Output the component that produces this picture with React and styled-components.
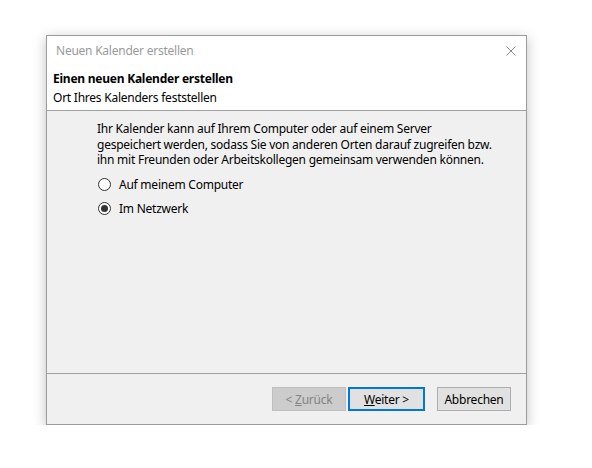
import React from "react"
import styled, { createGlobalStyle } from "styled-components"

const GlobalStyle = createGlobalStyle`
    html, body {
        margin: 0;
        padding: 0;
        background: #ffffff;
    }
    body {
        font-family: "Segoe UI", "Noto Sans", sans-serif;
        font-size: 12px;
        letter-spacing: -0.24px;
        color: #000;
    }
`

const Page = styled.div`
    padding: 35px 0 0 46px;
`

const Window = styled.div`
    width: 479px;
    height: 388px;
    display: flex;
    flex-direction: column;
    border: 1px solid #9c9c9c;
    background: #f0f0f0;
    box-shadow: 0 3px 12px rgba(0, 0, 0, 0.25);
`

const TitleBar = styled.div`
    height: 29px;
    display: flex;
    align-items: center;
    justify-content: space-between;
    padding: 0 10px 0 9px;
    background: #fff;
    color: #9a9a9a;
`

const CloseIcon = styled.svg`
    width: 10px;
    height: 10px;
`

const Header = styled.div`
    display: flex;
    flex-direction: column;
    gap: 3px;
    padding: 6px 6px 4px;
    background: #fff;
    border-bottom: 1px solid #a0a0a0;
    line-height: 16px;
`

const Heading = styled.div`
    font-weight: bold;
`

const Body = styled.div`
    flex: 1;
    padding: 10px 0 0 50px;
`

const Description = styled.p`
    margin: 0 0 5px;
    line-height: 15.5px;
`

const RadioRow = styled.label`
    height: 24px;
    display: flex;
    align-items: center;
    gap: 8px;
    padding-left: 1px;
`

const RadioCircle = styled.span`
    box-sizing: border-box;
    width: 13px;
    height: 13px;
    border: 1px solid #333;
    border-radius: 50%;
    background: #fff;
    display: flex;
    align-items: center;
    justify-content: center;

    &::after {
        content: "";
        width: 7px;
        height: 7px;
        border-radius: 50%;
        background: ${p => (p.$checked ? "#333" : "transparent")};
    }
`

const Footer = styled.div`
    display: flex;
    justify-content: flex-end;
    align-items: center;
    padding: 13px 15px 13px 0;
    border-top: 1px solid #a0a0a0;
`

const ButtonGroup = styled.div`
    display: flex;
    gap: 2px;
    margin-right: 12px;
`

const Button = styled.button`
    box-sizing: border-box;
    width: ${p => p.$width || 75}px;
    height: 24px;
    padding: 0;
    font: inherit;
    letter-spacing: inherit;
    background: ${p => (p.disabled ? "#cccccc" : "#e1e1e1")};
    color: ${p => (p.disabled ? "#838383" : "#000")};
    border: ${p => (p.$default ? "2px solid #0078d7" : p.disabled ? "1px solid #bfbfbf" : "1px solid #adadad")};
`

function Radio({ checked, children }) {
    return (
        <RadioRow>
            <RadioCircle $checked={checked} />
            {children}
        </RadioRow>
    )
}

export default function App() {
    return (
        <>
            <GlobalStyle />
            <Page>
                <Window>
                    <TitleBar>
                        <span>Neuen Kalender erstellen</span>
                        <CloseIcon viewBox="0 0 10 10">
                            <path d="M0.5 0.5 L9.5 9.5 M9.5 0.5 L0.5 9.5" stroke="#8a8a8a" strokeWidth="1" fill="none" />
                        </CloseIcon>
                    </TitleBar>
                    <Header>
                        <Heading>Einen neuen Kalender erstellen</Heading>
                        <div>Ort Ihres Kalenders feststellen</div>
                    </Header>
                    <Body>
                        <Description>
                            Ihr Kalender kann auf Ihrem Computer oder auf einem Server<br />
                            gespeichert werden, sodass Sie von anderen Orten darauf zugreifen bzw.<br />
                            ihn mit Freunden oder Arbeitskollegen gemeinsam verwenden können.
                        </Description>
                        <Radio>Auf meinem Computer</Radio>
                        <Radio checked>Im Netzwerk</Radio>
                    </Body>
                    <Footer>
                        <ButtonGroup>
                            <Button disabled $width={74}>&lt; <u>Z</u>urück</Button>
                            <Button $default $width={77}><u>W</u>eiter &gt;</Button>
                        </ButtonGroup>
                        <Button $width={74}>Abbrechen</Button>
                    </Footer>
                </Window>
            </Page>
        </>
    )
}
